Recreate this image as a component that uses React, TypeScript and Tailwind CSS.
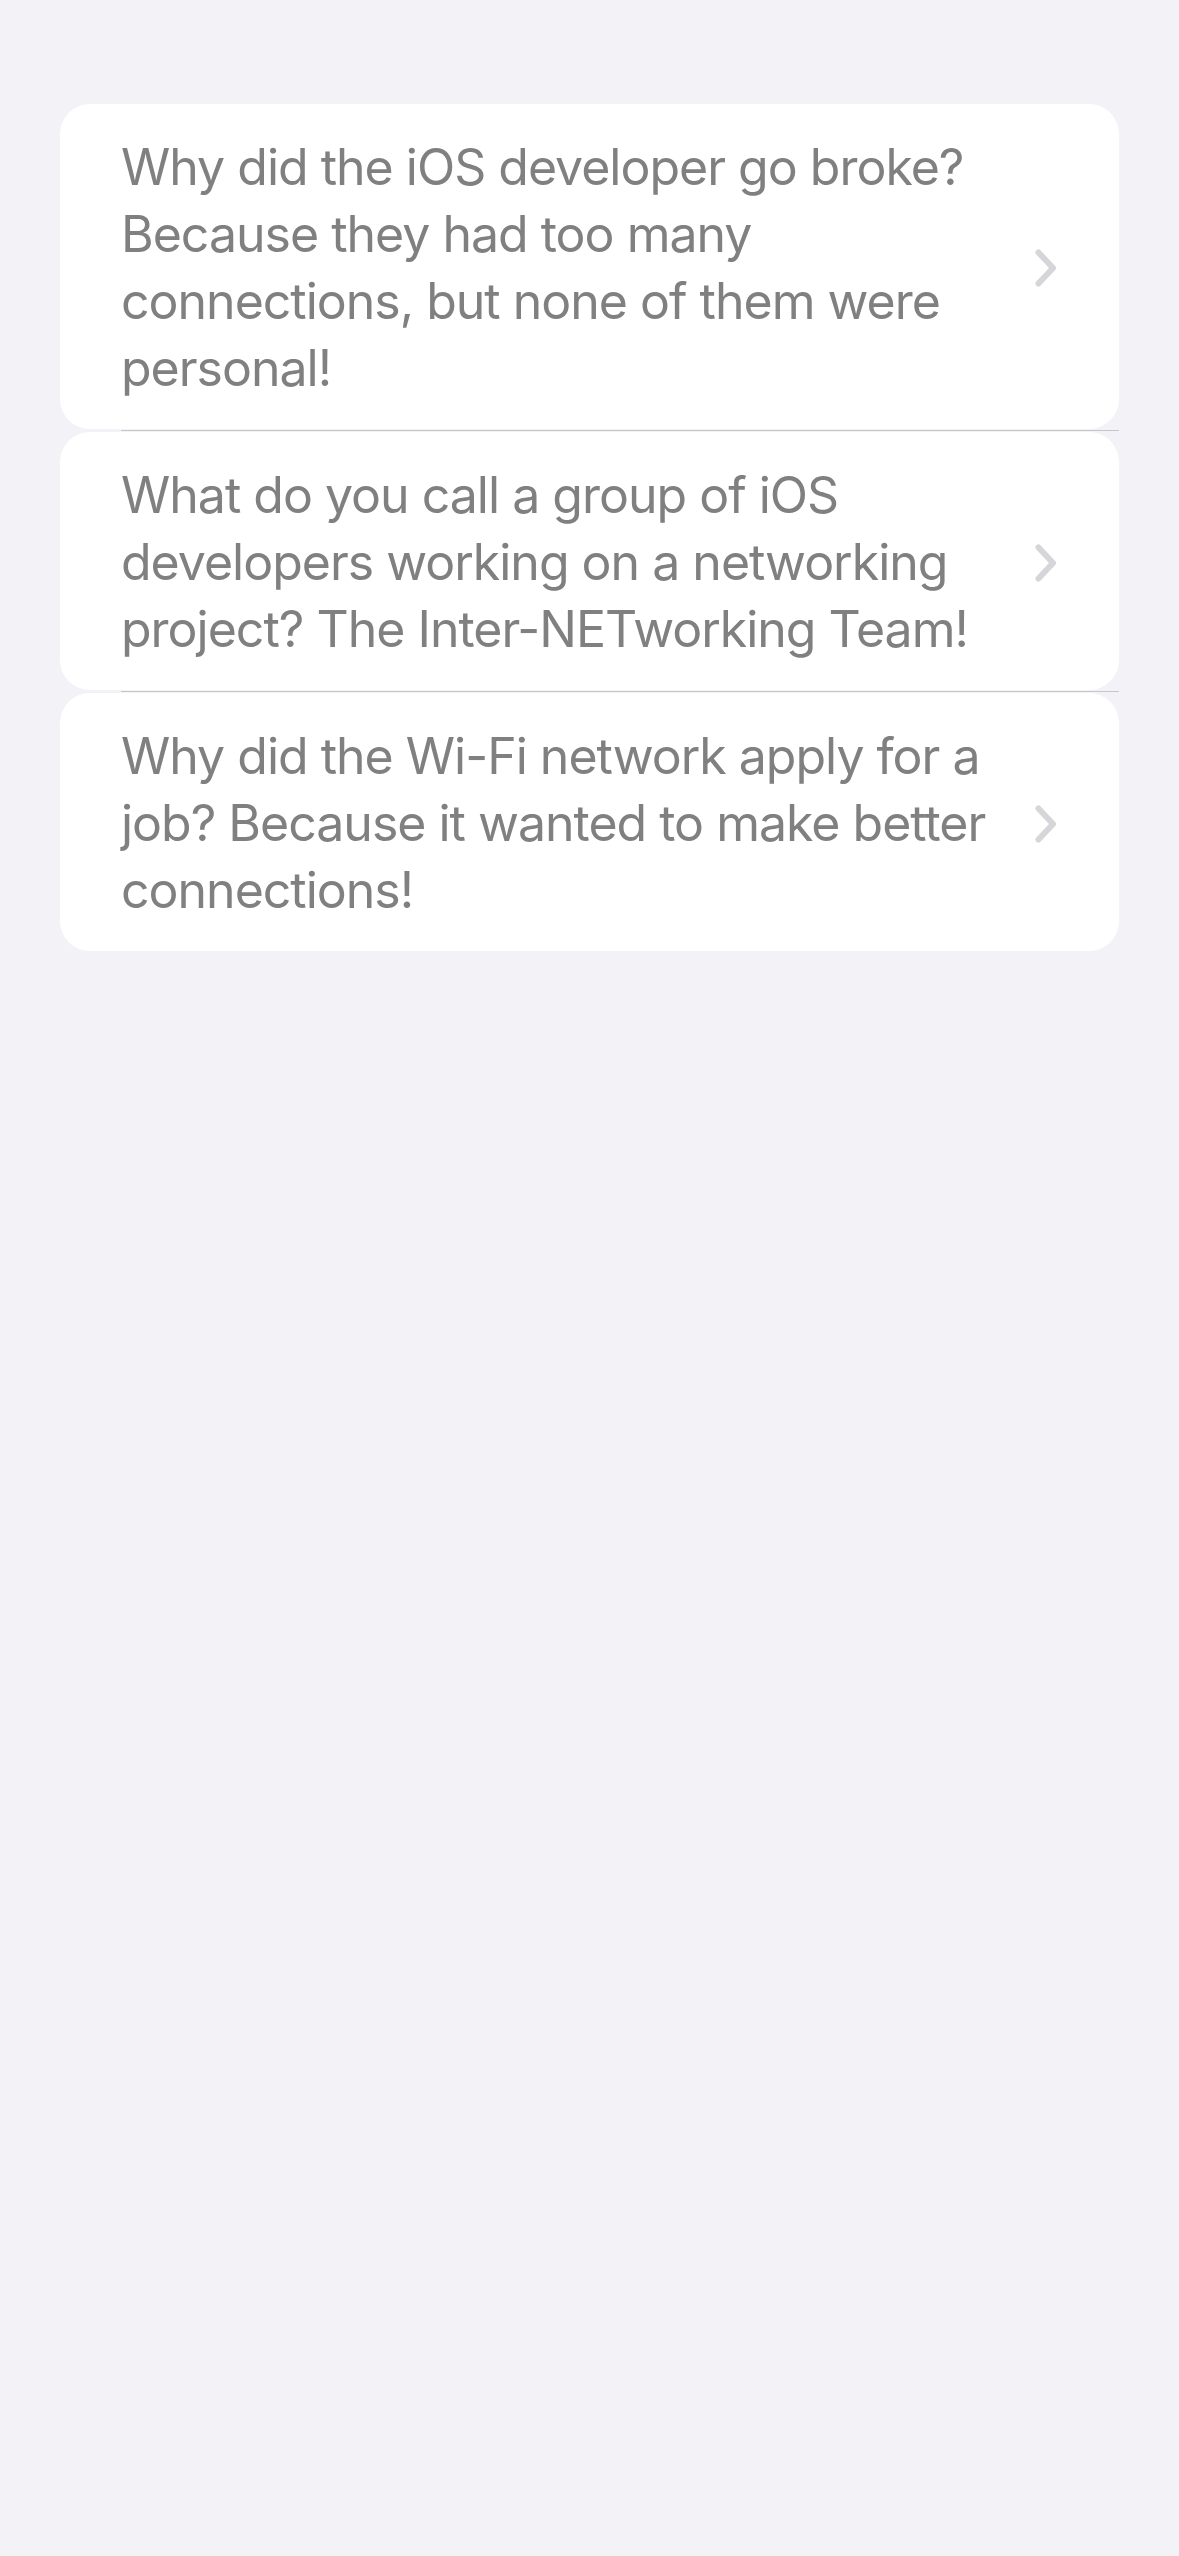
const jokes = [
  "Why did the iOS developer go broke? Because they had too many connections, but none of them were personal!",
  "What do you call a group of iOS developers working on a networking project? The Inter-NETworking Team!",
  "Why did the Wi-Fi network apply for a job? Because it wanted to make better connections!",
];

const Chevron = () => (
  <svg width="22" height="38" viewBox="0 0 22 38" fill="none" className="shrink-0">
    <path d="M3.5 3.5L18 19L3.5 34.5" stroke="#d6d6da" strokeWidth="6" strokeLinecap="round" strokeLinejoin="round" />
  </svg>
);

const App = () => {
  return (
    <div className="min-h-[2556px] w-full bg-[#f2f2f7] pt-[104px] px-[60px]" style={{ fontFamily: "Inter, 'Noto Sans', sans-serif" }}>
      <div className="flex flex-col">
        {jokes.map((joke, i) => (
          <div key={i} className="flex flex-col">
            {i > 0 && (
              <div className="pl-[61px] py-[1px]">
                <div className="h-[1px] bg-[#c6c6c8]"></div>
              </div>
            )}
            <div className="flex flex-row items-center bg-white rounded-[30px] pl-[61px] pr-[62px] pt-[30px] pb-[27px]">
              <p className="flex-1 text-[50px] leading-[67px] text-[#808080] tracking-[-1px] pr-[24px]">{joke}</p>
              <Chevron />
            </div>
          </div>
        ))}
      </div>
    </div>
  );
};

export default App;
